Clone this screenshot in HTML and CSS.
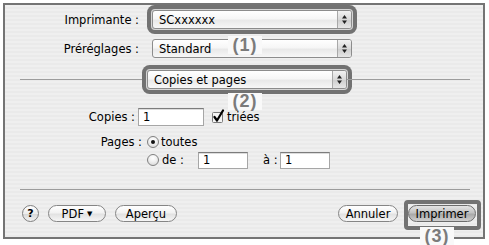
FILE: index.html
```html
<!DOCTYPE html>
<html lang="fr">
<head>
<meta charset="utf-8">
<title>Imprimer</title>
<link rel="stylesheet" href="styles.css">
</head>
<body>
<div class="window">
  <div class="form">
    <div class="row">
      <span class="label">Imprimante :</span>
      <div class="popup hl">
        <span class="popup-text">SCxxxxxx</span>
        <span class="popup-arrows"><svg width="7" height="11" viewBox="0 0 7 11"><path d="M3.5 1 L6 4.5 H1 Z M1 6.5 H6 L3.5 10 Z" fill="#222"/></svg></span>
      </div>
    </div>
    <div class="row row-gap">
      <span class="label">Préréglages :</span>
      <div class="popup">
        <span class="popup-text">Standard</span>
        <span class="popup-arrows"><svg width="7" height="11" viewBox="0 0 7 11"><path d="M3.5 1 L6 4.5 H1 Z M1 6.5 H6 L3.5 10 Z" fill="#222"/></svg></span>
      </div>
    </div>
    <div class="sep-row">
      <span class="line line-left"></span>
      <div class="popup hl">
        <span class="popup-text">Copies et pages</span>
        <span class="popup-arrows"><svg width="7" height="11" viewBox="0 0 7 11"><path d="M3.5 1 L6 4.5 H1 Z M1 6.5 H6 L3.5 10 Z" fill="#222"/></svg></span>
      </div>
      <span class="line line-right"></span>
    </div>
    <div class="row row-copies">
      <span class="label label-copies">Copies :</span>
      <span class="field field-copies">1</span>
      <span class="check"><svg width="13" height="14" viewBox="0 0 13 14"><rect x="0.5" y="3.5" width="10" height="10" rx="1" fill="#f4f4f4" stroke="#7a7a7a"/><path d="M2.5 8 L5 11.5 L11 1.5" stroke="#000" stroke-width="2.2" fill="none" stroke-linecap="round" stroke-linejoin="round"/></svg></span>
      <span class="opt">triées</span>
    </div>
    <div class="row row-pages">
      <span class="label label-pages">Pages :</span>
      <span class="radio radio-on"></span>
      <span class="opt">toutes</span>
    </div>
    <div class="row row-range">
      <span class="label label-pages"></span>
      <span class="radio"></span>
      <span class="opt opt-de">de :</span>
      <span class="field field-range">1</span>
      <span class="opt opt-a">à :</span>
      <span class="field field-range">1</span>
    </div>
  </div>
  <div class="sep"></div>
  <div class="buttons">
    <span class="help">?</span>
    <span class="btn btn-pdf">PDF <span class="caret">▼</span></span>
    <span class="btn btn-apercu">Aperçu</span>
    <span class="spacer"></span>
    <span class="btn btn-annuler">Annuler</span>
    <span class="btn btn-default">Imprimer</span>
  </div>
  <div class="hl-box hl-print"></div>
  <span class="callout callout-1">(1)</span>
  <span class="callout callout-2">(2)</span>
  <span class="callout callout-3">(3)</span>
</div>
</body>
</html>
```

FILE: styles.css
```css
html, body {
  margin: 0;
  padding: 0;
  background: #ffffff;
}
body {
  width: 489px;
  height: 245px;
  overflow: hidden;
  font-family: "DejaVu Sans", "Liberation Sans", sans-serif;
  font-size: 11.5px;
  color: #000;
}
.window {
  position: relative;
  box-sizing: border-box;
  width: 482px;
  height: 236px;
  margin: 3px 0 0 3px;
  border: 2px solid #747474;
  background: repeating-linear-gradient(to bottom, #efefef 0, #efefef 2px, #eaeaea 2px, #eaeaea 4px);
}
.form {
  display: flex;
  flex-direction: column;
  padding-top: 5px;
}
.row {
  display: flex;
  align-items: center;
  height: 19px;
}
.row-gap { margin-top: 10px; }
.label {
  box-sizing: border-box;
  width: 134px;
  margin-right: 8px;
  text-align: right;
  white-space: nowrap;
}
.label-copies { width: 130px; margin-right: 3px; }
.label-pages { width: 137px; margin-right: 5px; }

.popup {
  box-sizing: border-box;
  display: flex;
  align-items: stretch;
  width: 200px;
  height: 19px;
  border: 1px solid #8c8c8c;
  border-radius: 3px;
  background: linear-gradient(to bottom, #ffffff 0%, #f6f6f6 45%, #e9e9e9 55%, #f7f7f7 100%);
}
.row .popup { margin-left: 5px; }
.popup-text {
  flex: 1;
  display: flex;
  align-items: center;
  padding-left: 6px;
}
.popup-arrows {
  box-sizing: border-box;
  width: 14px;
  display: flex;
  align-items: center;
  justify-content: center;
  border-left: 1px solid #a8a8a8;
  border-radius: 0 2px 2px 0;
  background: linear-gradient(to bottom, #f2f2f2 0%, #d9d9d9 50%, #cdcdcd 52%, #e6e6e6 100%);
}
.hl {
  box-shadow: 0 0 0 1px #d6d6d6, 0 0 0 5px #727272;
}
.sep-row {
  display: flex;
  align-items: center;
  height: 19px;
  margin-top: 12px;
}
.line {
  height: 1px;
  background: #9c9c9c;
}
.line-left { width: 127px; margin-left: 15px; }
.line-right { width: 123px; }

.row-copies { margin-top: 19px; height: 18px; }
.row-pages { margin-top: 9px; height: 14px; }
.row-range { margin-top: 2px; height: 18px; }

.field {
  box-sizing: border-box;
  display: flex;
  align-items: center;
  height: 18px;
  padding-left: 4px;
  background: #ffffff;
  border: 1px solid #a6a6a6;
  border-top-color: #7c7c7c;
  box-shadow: inset 0 1px 0 #dcdcdc;
}
.field-copies { width: 66px; }
.field-range { width: 50px; height: 17px; }
.check {
  display: flex;
  margin-left: 8px;
  margin-top: -3px;
}
.opt { margin-left: 2px; white-space: nowrap; }
.radio {
  box-sizing: border-box;
  position: relative;
  width: 12px;
  height: 12px;
  border-radius: 50%;
  border: 1px solid #808080;
  background: radial-gradient(circle at 50% 30%, #ffffff 0%, #f0f0f0 45%, #d2d2d2 100%);
}
.radio-on::after {
  content: "";
  position: absolute;
  left: 3px;
  top: 3px;
  width: 4px;
  height: 4px;
  border-radius: 50%;
  background: #111;
}
.opt-de { margin-left: 3px; width: 36px; }
.opt-a { margin-left: 15px; width: 17px; }

.sep {
  height: 1px;
  margin: 20px 13px 0 15px;
  background: #9c9c9c;
}
.buttons {
  display: flex;
  align-items: center;
  height: 17px;
  margin-top: 15px;
  padding: 0 7px 0 17px;
}
.help {
  box-sizing: border-box;
  display: flex;
  align-items: center;
  justify-content: center;
  width: 17px;
  height: 17px;
  border-radius: 50%;
  border: 1px solid #7e7e7e;
  background: linear-gradient(to bottom, #ffffff 0%, #ececec 50%, #d8d8d8 55%, #f2f2f2 100%);
  font-weight: bold;
  font-size: 11px;
}
.btn {
  box-sizing: border-box;
  display: flex;
  align-items: center;
  justify-content: center;
  height: 17px;
  border: 1px solid #858585;
  border-radius: 9px;
  background: linear-gradient(to bottom, #ffffff 0%, #f2f2f2 45%, #e2e2e2 55%, #f6f6f6 100%);
  white-space: nowrap;
}
.btn-pdf { width: 58px; margin-left: 9px; }
.caret { font-size: 7px; margin-left: 3px; }
.btn-apercu { width: 62px; margin-left: 9px; }
.spacer { flex: 1; }
.btn-annuler { width: 60px; }
.btn-default {
  width: 68px;
  margin-left: 10px;
  border-color: #6c6c6c;
  background: linear-gradient(to bottom, #e4e4e4 0%, #c2c2c2 45%, #a9a9a9 55%, #cfcfcf 100%);
}
.hl-box {
  position: absolute;
  box-sizing: border-box;
  left: 399px;
  top: 195px;
  width: 77px;
  height: 30px;
  border: 4px solid #727272;
  border-radius: 4px;
}
.callout {
  position: absolute;
  box-sizing: border-box;
  width: 34px;
  height: 18px;
  display: flex;
  align-items: center;
  justify-content: center;
  background: #f9f9f9;
  color: #7b7b7b;
  font-family: "Liberation Sans", sans-serif;
  font-weight: bold;
  font-size: 18px;
  letter-spacing: 1px;
}
.callout-1 { left: 223px; top: 31px; }
.callout-2 { left: 223px; top: 88px; height: 17px; }
.callout-3 {
  left: 415px;
  top: 222px;
  height: 20px;
  align-items: flex-start;
  line-height: 18px;
}
```
